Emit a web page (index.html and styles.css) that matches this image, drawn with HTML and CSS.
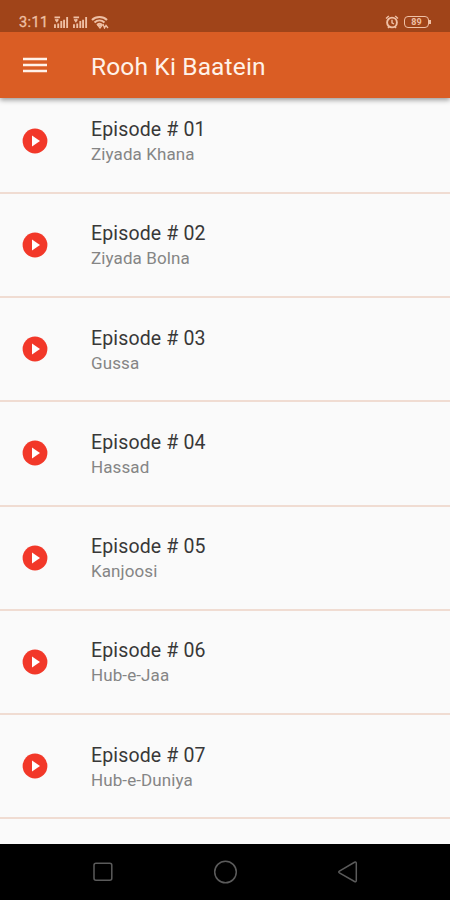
FILE: index.html
```html
<!DOCTYPE html>
<html lang="en">
<head>
<meta charset="utf-8">
<title>Rooh Ki Baatein</title>
<link rel="stylesheet" href="styles.css">
</head>
<body>
<svg width="0" height="0" class="defs">
  <symbol id="play" viewBox="0 0 26 26"><circle cx="13" cy="13" r="12.4" fill="#f23829"/><path d="M10 7.4v11.2l8-5.6z" fill="#fff"/></symbol>
  <symbol id="signal" viewBox="0 0 16 14"><path d="M1 1.5h6M2 3.5l1.5 2L5 3.5M1.5 13V9M5 13V8M8.3 13V5.5M11.3 13V4M14.6 13V1" fill="none" stroke="currentColor" stroke-width="2"/></symbol>
</svg>
<header class="header">
  <div class="status">
    <span class="time">3:11</span>
    <svg class="signal"><use href="#signal"/></svg>
    <svg class="signal"><use href="#signal"/></svg>
    <svg class="wifi" viewBox="0 0 18 13"><path d="M1 4C5 0 12 0 16 4M3.5 6.5c3-2.7 7-2.7 10 0M6 9c1.7-1.4 3.8-1.4 5.2 0" fill="none" stroke="currentColor" stroke-width="2"/><path d="M7 9.5h4L9 12zM12 8l1.5 4L15 9.5l2 2.5" fill="none" stroke="currentColor" stroke-width="1.3"/></svg>
    <svg class="alarm" viewBox="0 0 14 14"><circle cx="7" cy="7.5" r="4.9" fill="none" stroke="currentColor" stroke-width="1.9"/><path d="M1 3.5 3.8 1M13 3.5 10.2 1M7 4.8v3l2 1.2M3 13l1-1.3M11 13l-1-1.3" fill="none" stroke="currentColor" stroke-width="1.4"/></svg>
    <span class="battery">89</span>
  </div>
  <div class="toolbar">
    <svg class="menu" viewBox="0 0 24 16"><path d="M0 2h24M0 8h24M0 14h24" stroke="#fff2e9" stroke-width="2.6"/></svg>
    <h1 class="title">Rooh Ki Baatein</h1>
  </div>
</header>
<main class="list">
  <div class="row"><svg class="play"><use href="#play"/></svg><div><div class="name">Episode # 01</div><div class="sub">Ziyada Khana</div></div></div>
  <div class="row"><svg class="play"><use href="#play"/></svg><div><div class="name">Episode # 02</div><div class="sub">Ziyada Bolna</div></div></div>
  <div class="row"><svg class="play"><use href="#play"/></svg><div><div class="name">Episode # 03</div><div class="sub">Gussa</div></div></div>
  <div class="row"><svg class="play"><use href="#play"/></svg><div><div class="name">Episode # 04</div><div class="sub">Hassad</div></div></div>
  <div class="row"><svg class="play"><use href="#play"/></svg><div><div class="name">Episode # 05</div><div class="sub">Kanjoosi</div></div></div>
  <div class="row"><svg class="play"><use href="#play"/></svg><div><div class="name">Episode # 06</div><div class="sub">Hub-e-Jaa</div></div></div>
  <div class="row"><svg class="play"><use href="#play"/></svg><div><div class="name">Episode # 07</div><div class="sub">Hub-e-Duniya</div></div></div>
</main>
<nav class="nav">
  <svg viewBox="0 0 26 26"><rect x="4" y="4.2" width="17.8" height="17" rx="2"/></svg>
  <svg viewBox="0 0 26 26"><circle cx="13.5" cy="13" r="10.8"/></svg>
  <svg viewBox="0 0 26 26"><path d="M5.4 12.1 20.5 3.3q1.8-.7 1.8 1v17.2q0 1.7-1.8 1L5.4 13.8q-1.3-.8 0-1.7z"/></svg>
</nav>
</body>
</html>
```
FILE: styles.css
```css
* { box-sizing: border-box; }
body {
  margin: 0;
  height: 900px;
  overflow: hidden;
  display: flex;
  flex-direction: column;
  background: #fafafa;
  font-family: Roboto, sans-serif;
}
.defs { position: absolute; }
.header {
  position: relative;
  z-index: 1;
  flex: none;
  height: 98px;
  background: #da5d24;
  box-shadow: 0 2px 5px rgba(0, 0, 0, .4);
}
.status {
  height: 32px;
  padding: 12px 18px 0 19px;
  display: flex;
  align-items: center;
  background: #a04419;
  color: #efc0a5;
}
.time { width: 34px; font-size: 14.5px; letter-spacing: .4px; line-height: 20px; padding-top: 1px; -webkit-text-stroke: .3px; }
.signal { width: 16px; height: 13px; margin-right: 3px; }
.wifi { width: 18px; height: 13px; margin-left: 0; }
.alarm { width: 14px; height: 14px; margin-left: auto; margin-right: 3px; transform: translateX(-2px); }
.battery {
  position: relative;
  width: 25px;
  height: 12px;
  margin-right: 3px;
  border: 1.3px solid;
  border-radius: 4px;
  font-size: 9px;
  font-weight: 700;
  line-height: 10px;
  text-align: center;
}
.battery::after {
  content: "";
  position: absolute;
  right: -3px;
  top: 3px;
  width: 2px;
  height: 4px;
  background: currentColor;
}
.toolbar { height: 66px; display: flex; align-items: center; padding-left: 23px; }
.menu { width: 24px; height: 16px; margin-right: 44px; }
.title { margin: 0; padding-top: 2px; font-size: 24.5px; font-weight: 400; letter-spacing: .15px; color: #fff2e9; }
.list { flex: 1; min-height: 0; margin-top: -8.5px; overflow: hidden; }
.row {
  height: 104.28px;
  display: flex;
  align-items: center;
  padding-left: 22px;
  border-bottom: 2px solid #f0dcd2;
}
.play { width: 26px; height: 26px; margin-right: 43px; }
.name { padding-top: 2px; font-size: 19.5px; line-height: 25px; letter-spacing: .15px; color: #383838; }
.sub { font-size: 17px; line-height: 24px; letter-spacing: .1px; color: #858585; }
.nav {
  flex: none;
  height: 56px;
  background: #000;
  display: flex;
  align-items: center;
  justify-content: space-between;
  padding: 0 90px;
}
.nav svg { width: 26px; height: 26px; fill: none; stroke: #5b5b5b; stroke-width: 1.5; }
```
